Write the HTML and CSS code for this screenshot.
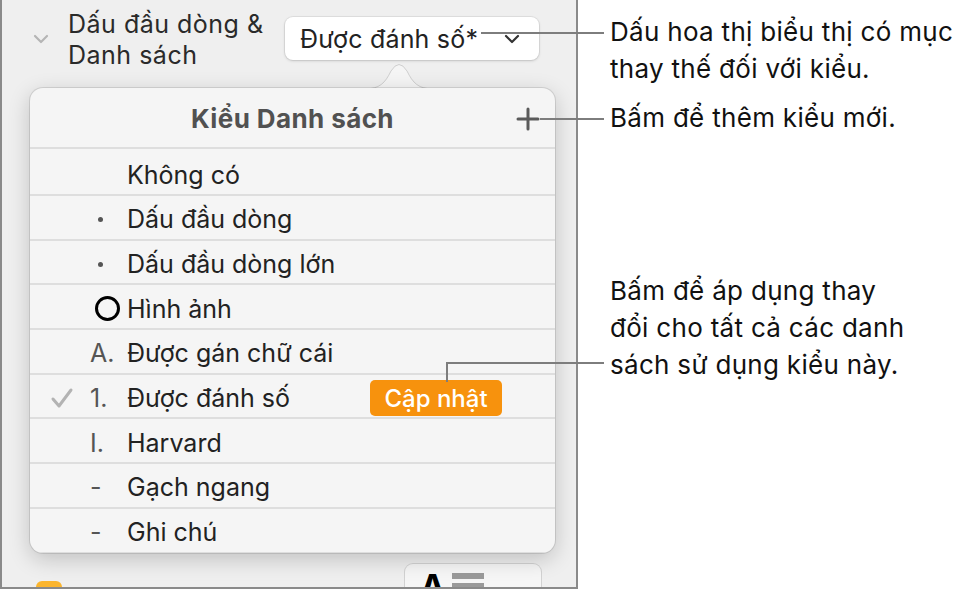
FILE: index.html
```html
<!DOCTYPE html>
<html lang="vi">
<head>
    <meta charset="UTF-8">
    <meta name="viewport" content="width=device-width, initial-scale=1.0">
    <title>Kiểu Danh sách</title>
    <link rel="stylesheet" href="styles.css">
</head>
<body>
    <div class="stage">
        <div class="panel">
            <div class="section-head">
                <svg class="disclosure" width="16" height="10" viewBox="0 0 16 10"><polyline points="2,2 8,8 14,2" fill="none" stroke="#b5b5b5" stroke-width="2.2" stroke-linecap="round" stroke-linejoin="round"/></svg>
                <div class="section-title">Dấu đầu dòng &amp;<br>Danh sách</div>
                <div class="popup-btn">
                    <span>Được đánh số*</span>
                    <svg width="16" height="10" viewBox="0 0 16 10"><polyline points="2,2 8,8 14,2" fill="none" stroke="#333" stroke-width="2.2" stroke-linecap="round" stroke-linejoin="round"/></svg>
                </div>
            </div>
            <div class="field-behind"><span class="field-tag"></span></div>

            <div class="bottom-row">
                <span class="swatch"></span>
                <span class="faded">Dòng</span>
                <div class="style-btn">
                    <span class="style-a">A</span>
                    <span class="style-lines"><i></i><i></i></span>
                </div>
            </div>

            <!-- popover over the inspector -->
            <svg class="pop-arrow" width="70" height="30" viewBox="0 0 70 30"><path d="M0,28 C16,28 21,22 27,10 Q35,-3 43,10 C49,22 54,28 70,28 Z" fill="#f5f5f5" stroke="#cfcfcf" stroke-width="1"/></svg>
            <div class="popover">
                <div class="pop-head">
                    <span class="pop-title">Kiểu Danh sách</span>
                    <svg class="plus" width="24" height="24" viewBox="0 0 24 24"><path d="M12 2v20M2 12h20" stroke="#5a5a5a" stroke-width="3" stroke-linecap="round"/></svg>
                </div>
                <ul class="style-list">
                    <li class="first"><span class="check"></span><span class="marker"></span><span class="label">Không có</span></li>
                    <li><span class="check"></span><span class="marker"><i class="dot"></i></span><span class="label">Dấu đầu dòng</span></li>
                    <li><span class="check"></span><span class="marker"><i class="dot"></i></span><span class="label">Dấu đầu dòng lớn</span></li>
                    <li><span class="check"></span><span class="marker"><i class="ring"></i></span><span class="label">Hình ảnh</span></li>
                    <li><span class="check"></span><span class="marker">A.</span><span class="label">Được gán chữ cái</span></li>
                    <li>
                        <span class="check"><svg width="24" height="22" viewBox="0 0 24 22"><polyline points="3,12 9,19 21,3" fill="none" stroke="#b3b3b3" stroke-width="3" stroke-linecap="round" stroke-linejoin="round"/></svg></span>
                        <span class="marker">1.</span><span class="label">Được đánh số</span>
                        <span class="update-btn">Cập nhật</span>
                    </li>
                    <li><span class="check"></span><span class="marker">I.</span><span class="label">Harvard</span></li>
                    <li><span class="check"></span><span class="marker">-</span><span class="label">Gạch ngang</span></li>
                    <li><span class="check"></span><span class="marker">-</span><span class="label">Ghi chú</span></li>
                </ul>
            </div>
        </div>

        <div class="notes">
            <p class="note note-star">Dấu hoa thị biểu thị có mục<br>thay thế đối với kiểu.</p>
            <p class="note note-add">Bấm để thêm kiểu mới.</p>
            <p class="note note-update">Bấm để áp dụng thay<br>đổi cho tất cả các danh<br>sách sử dụng kiểu này.</p>
        </div>

        <!-- callout leader lines -->
        <span class="leader leader-star"></span>
        <span class="leader leader-add"></span>
        <span class="leader leader-update"></span>
        <span class="leader leader-update-v"></span>
    </div>
</body>
</html>
```

FILE: styles.css
```css
* {
    box-sizing: border-box;
}
body {
    margin: 0;
    background: #fff;
    font-family: Inter, "Noto Sans", sans-serif;
    color: #1d1d1f;
}
.stage {
    position: relative;
    display: flex;
    width: 974px;
    height: 591px;
    overflow: hidden;
}
.panel {
    position: relative;
    width: 578px;
    height: 589px;
    flex: none;
    background: #efefef;
    border-left: 2px solid #8a8a8a;
    border-right: 2px solid #8a8a8a;
    border-bottom: 2px solid #8a8a8a;
    overflow: hidden;
}
.section-head {
    display: flex;
    align-items: flex-start;
    padding: 9px 0 0 31px;
}
.disclosure {
    margin-top: 25px;
    flex: none;
}
.section-title {
    margin-left: 19px;
    font-size: 25px;
    line-height: 31px;
    color: #2a2a2a;
    width: 212px;
    letter-spacing: 0.5px;
}
.popup-btn {
    margin-top: 8px;
    margin-left: 5px;
    width: 254px;
    height: 43px;
    background: #fff;
    border-radius: 8px;
    box-shadow: 0 0 0 1px rgba(0,0,0,0.06), 0 1px 3px rgba(0,0,0,0.15);
    display: flex;
    align-items: center;
    justify-content: space-between;
    padding: 0 19px 0 15px;
    font-size: 25px;
    letter-spacing: 0.2px;
    color: #222;
}
.field-behind {
    position: relative;
    margin: 20px 0 0 33px;
    width: 512px;
    height: 40px;
    background: #f7f7f7;
    border-radius: 10px;
    box-shadow: 0 0 0 1px rgba(0,0,0,0.08);
}
.field-tag {
    position: absolute;
    right: 12px;
    top: 2px;
    width: 26px;
    height: 12px;
    border-radius: 4px;
    background: #f0a81e;
}
.bottom-row {
    position: absolute;
    left: 0;
    top: 564px;
    right: 0;
    display: flex;
    align-items: flex-start;
    padding-left: 34px;
}
.swatch {
    margin-top: 17px;
    width: 26px;
    height: 26px;
    border-radius: 6px;
    background: #fbb52e;
}
.faded {
    margin: 22px 0 0 22px;
    font-size: 25px;
    color: #c4c4c4;
}
.style-btn {
    margin-left: auto;
    margin-right: 35px;
    width: 136px;
    height: 40px;
    background: #f6f6f6;
    border-radius: 8px;
    box-shadow: 0 0 0 1px rgba(0,0,0,0.12);
    display: flex;
    align-items: flex-start;
    padding: 6px 0 0 15px;
}
.style-a {
    font-size: 34px;
    font-weight: 700;
    line-height: 1;
    color: #000;
}
.style-lines {
    display: flex;
    flex-direction: column;
    gap: 4px;
    margin: 3px 0 0 7px;
}
.style-lines i {
    display: block;
    width: 32px;
    height: 6px;
    background: #9a9a9a;
}
.pop-arrow {
    position: absolute;
    left: 362px;
    top: 61px;
}
.popover {
    position: absolute;
    left: 28px;
    top: 88px;
    width: 525px;
    height: 465px;
    background: #f5f5f5;
    border-radius: 13px;
    box-shadow: 0 0 0 1px rgba(0,0,0,0.1), 0 6px 22px rgba(0,0,0,0.2);
    overflow: hidden;
}
.pop-head {
    position: relative;
    height: 61px;
    display: flex;
    align-items: center;
    justify-content: center;
    border-bottom: 2px solid #dedede;
}
.pop-title {
    font-size: 26px;
    font-weight: 700;
    letter-spacing: 0.4px;
    color: #515151;
    padding-top: 1px;
}
.plus {
    position: absolute;
    right: 15px;
    top: 19px;
}
.style-list {
    list-style: none;
    margin: 0;
    padding: 0;
}
.style-list li {
    height: 44.7px;
    display: flex;
    align-items: center;
    padding-top: 4px;
    border-bottom: 2px solid #dedede;
    font-size: 25px;
    color: #222;
}
.style-list li.first {
    height: 47px;
    padding-top: 7px;
}
.check {
    width: 60px;
    padding-left: 20px;
    display: flex;
    align-items: center;
}
.marker {
    width: 37px;
    color: #555;
    display: flex;
    align-items: center;
}
.marker .dot {
    display: block;
    width: 5px;
    height: 5px;
    border-radius: 50%;
    background: #555;
    margin-left: 8px;
}
.marker .ring {
    display: block;
    width: 25px;
    height: 25px;
    border-radius: 50%;
    border: 3.5px solid #000;
    margin-left: 5px;
}
.label {
    flex: 1;
}
.update-btn {
    margin-right: 53px;
    width: 132px;
    height: 36px;
    display: flex;
    align-items: center;
    justify-content: center;
    background: #f7920d;
    color: #fff;
    font-size: 24px;
    font-weight: 500;
    border-radius: 5px;
}
.notes {
    padding: 13px 0 0 32px;
    display: flex;
    flex-direction: column;
}
.note {
    margin: 0;
    font-size: 26px;
    line-height: 37px;
    letter-spacing: 0.3px;
    color: #111;
}
.note-add {
    margin-top: 12px;
}
.note-update {
    margin-top: 136px;
}
.leader {
    position: absolute;
    background: #7d7d7d;
    height: 2px;
}
.leader-star {
    left: 481px;
    top: 32px;
    width: 123px;
}
.leader-add {
    left: 540px;
    top: 118px;
    width: 64px;
}
.leader-update {
    left: 446px;
    top: 362px;
    width: 158px;
}
.leader-update-v {
    left: 446px;
    top: 362px;
    width: 2px;
    height: 20px;
}
```
